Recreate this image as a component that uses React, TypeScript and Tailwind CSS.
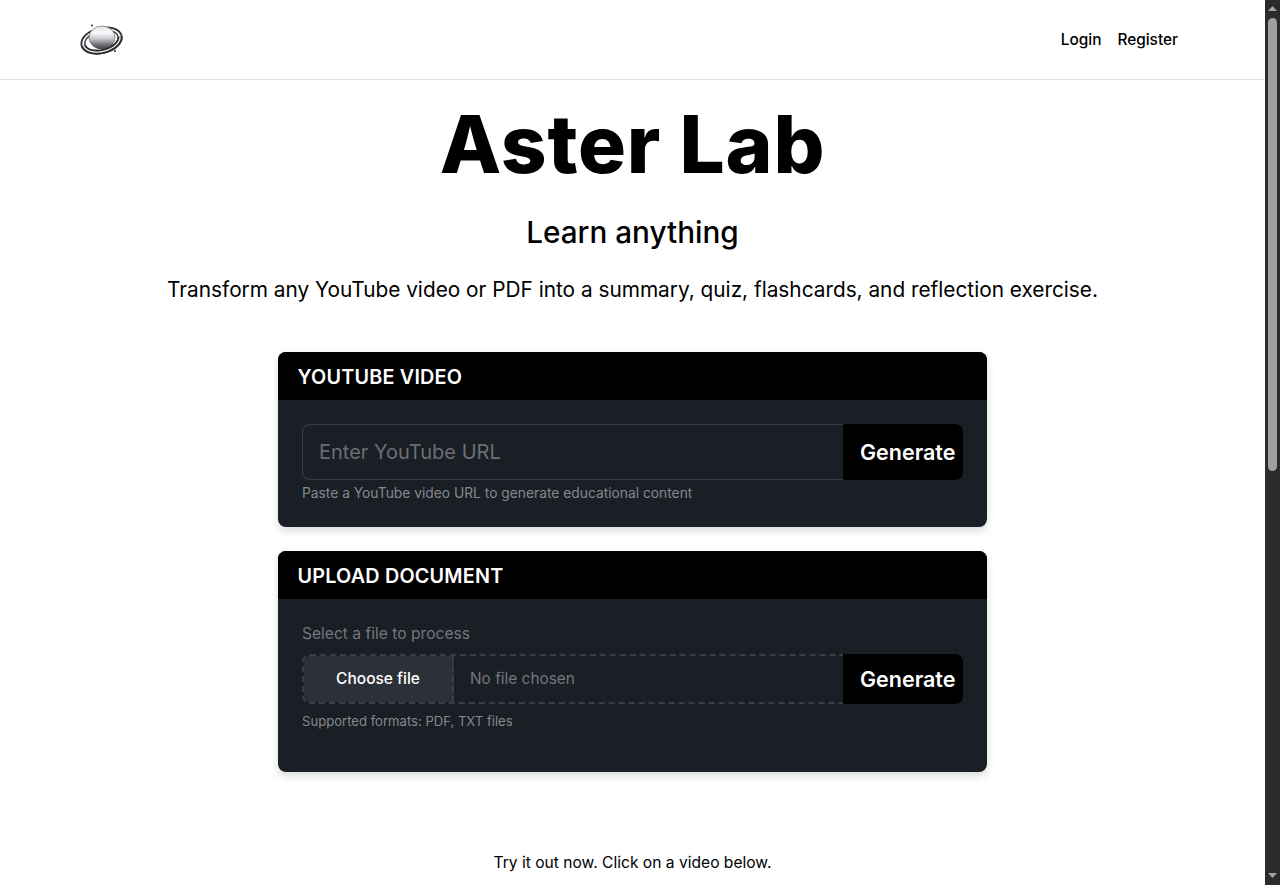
function PlanetLogo() {
  return (
    <svg width="44" height="32" viewBox="0 0 44 32" fill="none">
      <defs>
        <linearGradient id="planet" x1="0" y1="0" x2="0" y2="1">
          <stop offset="0" stopColor="#e4e4e8" />
          <stop offset="0.3" stopColor="#fafafa" />
          <stop offset="0.55" stopColor="#c8c8ce" />
          <stop offset="0.75" stopColor="#83838a" />
          <stop offset="1" stopColor="#3c3c42" />
        </linearGradient>
      </defs>
      <ellipse cx="21.5" cy="16.5" rx="20.5" ry="12.5" transform="rotate(-14 21.5 16.5)" stroke="#2c2c30" strokeWidth="1.8" />
      <ellipse cx="21.5" cy="16.5" rx="17" ry="9.5" transform="rotate(-14 21.5 16.5)" stroke="#4a4a50" strokeWidth="1.5" />
      <ellipse cx="22" cy="13.5" rx="13" ry="11.5" fill="url(#planet)" stroke="#55555a" strokeWidth="0.6" />
      <path d="M3 21.2A19 11 -14 0 0 40 11.8" stroke="#ffffff" strokeWidth="4" />
      <path d="M1.6 21.5A20.5 12.5 -14 0 0 41.4 11.5" stroke="#2c2c30" strokeWidth="2" />
      <path d="M3.2 21.1A19 11 -14 0 0 39.8 11.9" stroke="#77777c" strokeWidth="0.7" />
      <path d="M5 20.6A17 9.5 -14 0 0 38 12.4" stroke="#26262a" strokeWidth="1.6" />
      <circle cx="12" cy="1.5" r="1" fill="#333333" />
      <circle cx="35" cy="27" r="1" fill="#333333" />
    </svg>
  );
}

function Scrollbar() {
  return (
    <aside className="flex h-full w-[15px] shrink-0 flex-col items-center justify-between bg-[#2b2b2b] pt-[6px] pb-[7px]">
      <div className="flex flex-col items-center">
        <svg width="9" height="5" viewBox="0 0 9 5">
          <path d="M4.5 0L9 5H0z" fill="#a3a3a3" />
        </svg>
        <div className="mt-[7px] h-[453px] w-[9px] rounded-full bg-[#9f9f9f]" />
      </div>
      <svg width="9" height="5" viewBox="0 0 9 5">
        <path d="M0 0H9L4.5 5z" fill="#a3a3a3" />
      </svg>
    </aside>
  );
}

function CardHeader({ title }: { title: string }) {
  return (
    <div className="flex h-12 items-center bg-black pt-[3px] pl-[19.5px]">
      <h2 className="text-[19.8px] font-semibold tracking-[0.2px] text-white">{title}</h2>
    </div>
  );
}

function GenerateButton({ tall }: { tall: string }) {
  return (
    <button className={`w-[120px] shrink-0 rounded-r-lg bg-black pl-[17px] text-left text-[21.5px] font-semibold text-white ${tall}`}>
      Generate
    </button>
  );
}

export default function App() {
  return (
    <div className="flex h-screen overflow-hidden bg-white font-['Inter',sans-serif] text-black">
      <div className="min-w-0 flex-1">
        <nav className="flex h-20 items-center justify-between border-b border-[#dee2e6] pl-20 pr-[87px]">
          <PlanetLogo />
          <div className="flex gap-[16px] text-[15.4px] font-medium">
            <a>Login</a>
            <a>Register</a>
          </div>
        </nav>

        <main className="flex flex-col items-center">
          <h1 className="mt-[14px] text-[80px] leading-[100px] font-extrabold tracking-[0.8px]">Aster Lab</h1>
          <p className="mt-[18px] text-[29.7px] leading-10 font-medium">Learn anything</p>
          <p className="mt-[22px] text-[20.8px] leading-8">
            Transform any YouTube video or PDF into a summary, quiz, flashcards, and reflection exercise.
          </p>

          <section className="mt-[46px] w-[709px] overflow-hidden rounded-lg bg-[#1a1e25] shadow-[0_4px_8px_rgba(0,0,0,0.15)]">
            <CardHeader title="YOUTUBE VIDEO" />
            <div className="px-6 pt-6 pb-6">
              <div className="flex">
                <input
                  placeholder="Enter YouTube URL"
                  className="h-14 min-w-0 flex-1 rounded-l-lg border border-r-0 border-[#3a3e46] bg-transparent px-4 text-[20px] outline-none placeholder:text-[#6b6e75]"
                />
                <GenerateButton tall="h-14" />
              </div>
              <p className="mt-[3px] text-[13.8px] leading-5 text-[#858890]">
                Paste a YouTube video URL to generate educational content
              </p>
            </div>
          </section>

          <section className="mt-6 w-[709px] overflow-hidden rounded-lg bg-[#1a1e25] shadow-[0_4px_8px_rgba(0,0,0,0.15)]">
            <CardHeader title="UPLOAD DOCUMENT" />
            <div className="px-6 pt-[25px] pb-[41px]">
              <p className="text-[15.6px] leading-5 text-[#74777e]">Select a file to process</p>
              <div className="mt-[10px] flex">
                <div className="flex h-[50px] min-w-0 flex-1 items-center rounded-l-lg border-2 border-r-0 border-dashed border-[#3a3e46]">
                  <button className="-my-0.5 h-[46px] w-[150px] rounded-l-md border-r-2 border-dashed border-[#3a3e46] bg-[#2c3038] text-[15.5px] font-medium text-white">
                    Choose file
                  </button>
                  <span className="ml-4 text-[15.4px] text-[#74777e]">No file chosen</span>
                </div>
                <GenerateButton tall="h-[50px]" />
              </div>
              <p className="mt-[7px] text-[13.1px] leading-5 text-[#858890]">Supported formats: PDF, TXT files</p>
            </div>
          </section>

          <p className="mt-[79px] text-[15.6px] leading-6">Try it out now. Click on a video below.</p>
        </main>
      </div>
      <Scrollbar />
    </div>
  );
}
